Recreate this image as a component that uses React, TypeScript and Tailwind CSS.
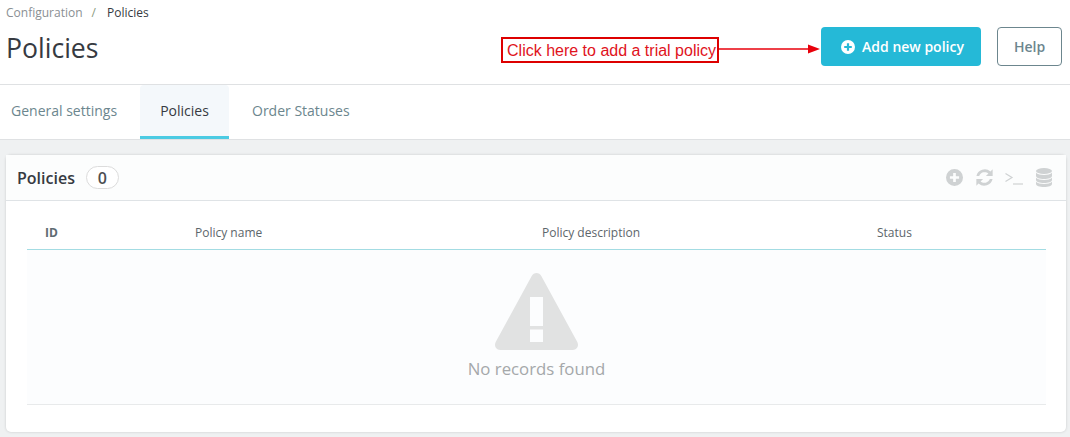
const PlusCircle = ({ className }: { className: string }) => (
  <svg viewBox="0 0 24 24" className={className} fill="currentColor">
    <path d="M12 0a12 12 0 1 0 0 24 12 12 0 0 0 0-24zm1.9 5.5v4.6h4.6v3.8h-4.6v4.6h-3.8v-4.6H5.5v-3.8h4.6V5.5z" fillRule="evenodd" />
  </svg>
);

const Refresh = ({ className }: { className: string }) => (
  <svg viewBox="0 0 24 24" className={className} fill="currentColor">
    <path d="M23.500 0.500v9.500h-9.500l3.500-3.500A8 8 0 0 0 4.500 10H0.600A12 12 0 0 1 20.400 3.600z" />
    <path d="M0.500 23.500v-9.500h9.500l-3.500 3.500A8 8 0 0 0 19.500 14h3.900A12 12 0 0 1 3.600 20.400z" />
  </svg>
);

const Terminal = ({ className }: { className: string }) => (
  <svg viewBox="0 0 18 14" className={className} fill="none" stroke="currentColor" strokeWidth="1.200">
    <path d="M0.500 2.500 7 6.500 0.500 10.500" />
    <path d="M8 13h10" />
  </svg>
);

const Stack = ({ className }: { className: string }) => (
  <svg viewBox="0 0 16 19" className={className} fill="currentColor">
    <ellipse cx="8" cy="3" rx="8" ry="3" />
    <path d="M0 4.800C1.500 6.300 4.500 7 8 7s6.500-.7 8-2.200V8c0 1.700-3.600 3-8 3S0 9.700 0 8z" />
    <path d="M0 9.800C1.500 11.300 4.500 12 8 12s6.500-.7 8-2.200V12c0 1.700-3.600 3-8 3s-8-1.300-8-3z" />
    <path d="M0 13.800C1.500 15.300 4.500 16 8 16s6.500-.7 8-2.200V16c0 1.700-3.600 3-8 3s-8-1.300-8-3z" />
  </svg>
);

const columns = [
  { label: 'ID', width: 'w-[150px]', bold: true },
  { label: 'Policy name', width: 'w-[347px]', bold: false },
  { label: 'Policy description', width: 'w-[335px]', bold: false },
  { label: 'Status', width: 'w-[187px]', bold: false },
];

const App = () => {
  return (
    <div className="relative h-[437px] w-[1070px] overflow-hidden bg-[#eff1f2] font-['Open_Sans',sans-serif] text-[#363a41]">
      <header className="h-[85px] border-b border-[#dfe1e3] bg-white pl-[6px] pr-2">
        <div className="flex h-[25px] items-center text-xs">
          <span className="text-[#8a8f93]">Configuration</span>
          <span className="ml-[9px] text-[#8a9a80]">/</span>
          <span className="ml-[11px] text-[#363a41]">Policies</span>
        </div>
        <div className="flex items-start justify-between">
          <h1 className="mt-[5px] text-[26.6px] leading-[36px]">Policies</h1>
          <div className="mt-[2px] flex gap-4">
            <button className="flex h-[39px] w-[160px] items-center justify-center gap-[7px] rounded bg-[#25b9d7] pl-[3px] text-sm font-semibold text-white">
              <PlusCircle className="h-[14px] w-[14px]" />
              Add new policy
            </button>
            <button className="h-[39px] w-[65px] rounded border border-[#6c868e] bg-white text-sm font-semibold text-[#6c868e]">
              Help
            </button>
          </div>
        </div>
      </header>

      <nav className="flex h-[55px] border-b border-[#dfe1e3] bg-white text-sm">
        <a className="flex w-[140px] items-center pb-[2px] pl-[11px] text-[#6c868e]">General settings</a>
        <a className="flex w-[89px] items-center justify-center rounded-t border-b-[3px] border-[#4bcbe3] bg-[#f4f8fb] pt-[1px] text-[#363a41]">
          Policies
        </a>
        <a className="flex items-center pb-[2px] pl-[23px] text-[#6c868e]">Order Statuses</a>
      </nav>

      <section className="ml-[6px] mt-[15px] h-[277px] w-[1060px] rounded-[5px] bg-white shadow-[0_0_3px_rgba(0,0,0,0.16)]">
        <div className="flex h-[46px] items-center justify-between border-b border-[#dfe3e6] bg-[#fcfdfd] pl-[11px] pr-[14px]">
          <div className="flex items-center gap-[11px]">
            <h2 className="text-base font-semibold">Policies</h2>
            <span className="flex h-[23px] w-[33px] items-center justify-center rounded-full border border-[#dcdcdc] bg-white text-base font-semibold text-[#4d4f52]">
              0
            </span>
          </div>
          <div className="flex items-center text-[#cfd2d3]">
            <PlusCircle className="h-[17px] w-[17px]" />
            <Refresh className="ml-[13px] h-[17px] w-[17px]" />
            <Terminal className="ml-[12px] h-[14px] w-[18px]" />
            <Stack className="ml-[13px] h-[19px] w-[16px]" />
          </div>
        </div>

        <div className="ml-[21px] w-[1019px] pt-[14px]">
          <div className="flex h-[34px] items-center pt-[2px] text-xs text-[#5d666b]">
            {columns.map((col) => (
              <div key={col.label} className={`${col.width} pl-[18px] ${col.bold ? 'font-bold text-[#5f6b72]' : ''}`}>
                {col.label}
              </div>
            ))}
          </div>
          <div className="h-px bg-[#a3dce3]" />
          <div className="flex h-[155px] flex-col items-center border-b border-[#e8eaeb] bg-[#fcfdfe] pt-[23px]">
            <svg viewBox="0 0 84 78" className="-ml-[1px] h-[78px] w-[85px] text-[#e1e2e2]" fill="currentColor">
              <path
                fillRule="evenodd"
                d="M42 0c2 0 3.700 1 4.800 3l36 66c1.800 3.500 0 8-4.500 8H5.700C1.200 77-.6 72.500 1.200 69l36-66C38.300 1 40 0 42 0zM35.500 24v29h13V24zm0 32.500V69h13V56.500z"
              />
            </svg>
            <p className="mt-[6px] text-[16.800px] leading-6 text-[#a5a8aa]">No records found</p>
          </div>
        </div>
      </section>

      {/* annotation drawn over the page */}
      <div className="absolute left-[501px] top-[37px] flex h-[26px] w-[218px] items-center justify-end whitespace-nowrap border-2 border-[#dd0000] bg-white pr-[1px] pt-[1px] font-['Liberation_Sans',sans-serif] text-base text-[#e0131c]">
        Click here to add a trial policy
      </div>
      <svg className="absolute left-[719px] top-[43px] h-3 w-[101px]" viewBox="0 0 101 12">
        <path d="M0 6h90" stroke="#e8000b" strokeWidth="1.500" />
        <path d="M89 1.500 101 6 89 10.500z" fill="#e8000b" />
      </svg>
    </div>
  );
};

export default App;
